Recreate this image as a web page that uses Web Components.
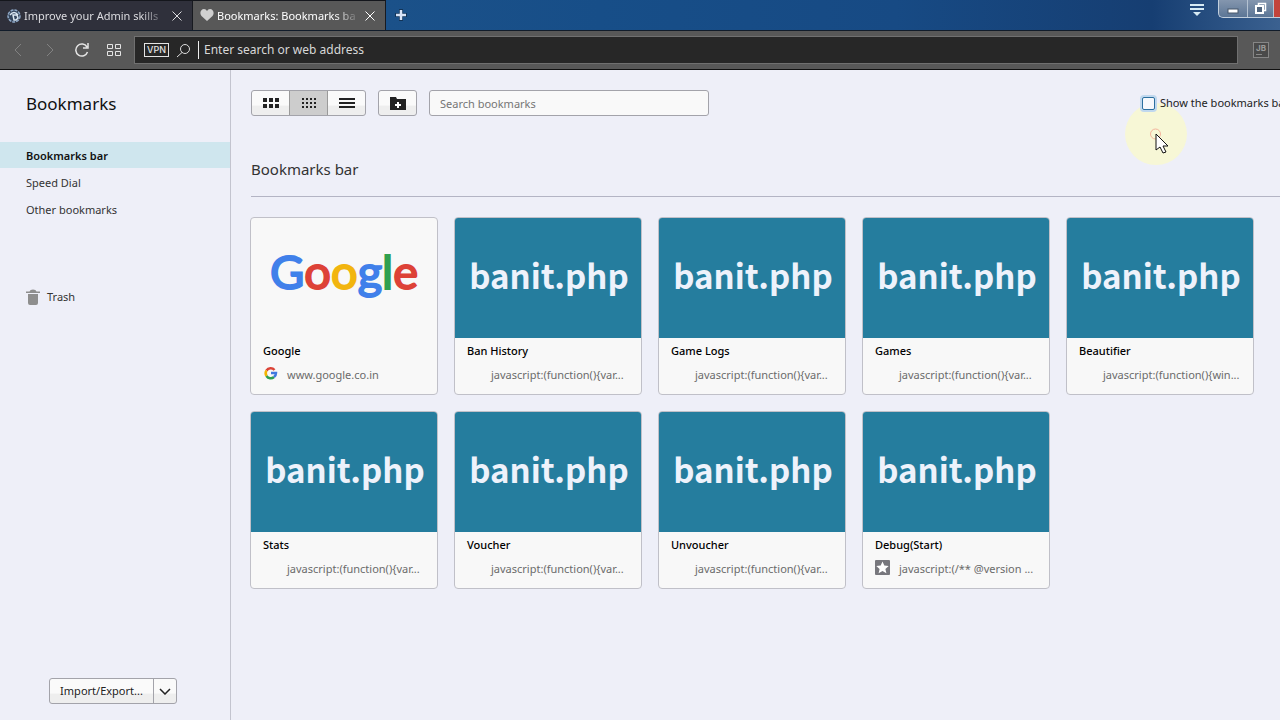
<!DOCTYPE html>
<html lang="en">
<head>
<meta charset="utf-8">
<title>Bookmarks</title>
<style>
html,body{height:100%;margin:0}
body{overflow:hidden;font:11px/18px "Noto Sans","Open Sans",sans-serif;color:#222;background:#eeeff8}
</style>
</head>
<body>
<browser-window>
  <tab-strip slot="tabs">
    <browser-tab><site-globe slot="icon"></site-globe>Improve your Admin skills</browser-tab>
    <browser-tab selected><heart-icon slot="icon"></heart-icon>Bookmarks: Bookmarks bar</browser-tab>
  </tab-strip>
  <address-bar slot="address"></address-bar>
  <bookmark-sidebar slot="side"></bookmark-sidebar>
  <bookmark-toolbar slot="main"></bookmark-toolbar>
  <bookmark-folder slot="main" name="Bookmarks bar">
    <bookmark-card name="Google" url="www.google.co.in" kind="google"></bookmark-card>
    <bookmark-card name="Ban History" url="javascript:(function(){var..."></bookmark-card>
    <bookmark-card name="Game Logs" url="javascript:(function(){var..."></bookmark-card>
    <bookmark-card name="Games" url="javascript:(function(){var..."></bookmark-card>
    <bookmark-card name="Beautifier" url="javascript:(function(){win..."></bookmark-card>
    <bookmark-card name="Stats" url="javascript:(function(){var..."></bookmark-card>
    <bookmark-card name="Voucher" url="javascript:(function(){var..."></bookmark-card>
    <bookmark-card name="Unvoucher" url="javascript:(function(){var..."></bookmark-card>
    <bookmark-card name="Debug(Start)" url="javascript:(/** @version ..." kind="star"></bookmark-card>
  </bookmark-folder>
</browser-window>
<pointer-highlight></pointer-highlight>
<script>
const base = `*,:host{box-sizing:border-box}button,input{font:inherit;color:inherit;margin:0}svg{display:block;flex:none}button{padding:0}`;
function element(name, build) {
  customElements.define(name, class extends HTMLElement {
    constructor() {
      super();
      const [css, html] = build(this);
      this.attachShadow({mode: 'open'}).innerHTML = `<style>${base}${css}</style>${html}`;
    }
  });
}

element('browser-window', () => [`
  :host{display:flex;flex-direction:column;height:100vh}
  .body{display:flex;flex:1;min-height:0}
  main{flex:1;min-width:0;padding:20px 0 0 19px}
`, `<header><slot name="tabs"></slot><slot name="address"></slot></header>
  <div class="body"><slot name="side"></slot><main><slot name="main"></slot></main></div>`]);

element('tab-strip', () => [`
  :host{display:flex;height:31px;overflow:hidden;border-bottom:1px solid #111c2a;background:linear-gradient(90deg,#1b5189 385px,#174e88 600px,#174a84 70%,#163e72 90%,#3b6190)}
  .new{width:30px;border:0;background:none;display:grid;place-items:center}
  .space{flex:1}
  .menu{width:32px;height:20px;border:0;background:none;display:grid;place-items:center;margin-right:5px}
  .win{display:flex;height:18px;border:1px solid #c2cfdd;border-top:0;border-right:0;border-radius:0 0 0 5px;background:linear-gradient(#8496ae,#5c7696)}
  .win button{border:0;border-right:1px solid #b4c2d2;background:none;width:29px;display:grid;place-items:center}
  .win button:nth-child(2){width:26px}
  .win button.x{width:6px;background:#c3443c;border:0}
`, `<slot></slot>
  <button class="new" aria-label="New tab"><svg width="12" height="12"><path d="M6 0v12M0 6h12" stroke="#123458" stroke-width="4"/><path d="M6 1v10M1 6h10" stroke="#d8e4f8" stroke-width="2.500"/></svg></button>
  <span class="space"></span>
  <button class="menu" aria-label="Tab menu"><svg width="14" height="13"><path d="M0 1h14M0 5h14" stroke="#d6eaf4" stroke-width="2"/><path d="M3 8h8l-4 4z" fill="#d6eaf4"/></svg></button>
  <div class="win"><button aria-label="Minimize"><svg width="12" height="12"><rect x="1" y="6" width="10" height="4" fill="#fff" stroke="#46566a"/></svg></button>
  <button aria-label="Restore"><svg width="13" height="13"><path d="M4.500 3V1.500h7v7H10" fill="none" stroke="#fff" stroke-width="1.500"/><rect x="2" y="4" width="7" height="7" fill="#50657f" stroke="#fff" stroke-width="2"/></svg></button>
  <button class="x" aria-label="Close"></button></div>`]);

element('browser-tab', () => [`
  :host{display:flex;align-items:center;width:193px;height:30px;padding:0 7px 0 7px;gap:3px;background:#2f303b;color:#dcdce0;border-right:1px solid #181a20;border-top:1px solid #14161c}
  :host([selected]){background:#585858;color:#fff}
  .t{flex:1;overflow:hidden;white-space:nowrap;-webkit-mask:linear-gradient(90deg,#000 85%,#0003)}
  button{width:16px;height:16px;border:0;background:none;display:grid;place-items:center;margin-left:4px}
`, `<slot name="icon"></slot><span class="t"><slot></slot></span>
  <button aria-label="Close tab"><svg width="10" height="10"><path d="M.5.5l9 9M9.500.5l-9 9" stroke="currentColor"/></svg></button>`]);

element('site-globe', () => [`:host{display:block}`, `<svg width="14" height="14"><circle cx="7" cy="7" r="6" fill="#34465e" stroke="#8fa9c8" stroke-width="1.500" stroke-dasharray="3 1"/><path d="M3 6q4-5 8 0M6 6h4l1 3-2 2H7z" stroke="#dce8f4" stroke-width="1.500" fill="none"/></svg>`]);
element('heart-icon', () => [`:host{display:block}`, `<svg width="14" height="13"><path d="M7 12L1.500 7C-1 4 1 0 4 0q2 0 3 2q1-2 3-2c3 0 5 4 2.500 7z" fill="#d0d0d0"/></svg>`]);

element('address-bar', () => [`
  :host{display:flex;align-items:center;height:39px;background:#585858;border-bottom:1px solid #111;padding:0 11px 0 2px}
  .nav{border:0;background:none;width:32px;height:28px;display:grid;place-items:center;color:#e4e4e4}
  .nav:disabled{color:#828282}
  .field{flex:1;display:flex;align-items:center;height:28px;background:#272727;border:1px solid #707070;padding:0 8px 0 9px;gap:7px}
  .gridb{margin-right:4px}
  .vpn{height:14px;width:25px;border:1px solid #e4e4e4;background:none;color:#e4e4e4;font:500 9px/12px Inter,sans-serif}
  input{flex:1;border:0;border-left:1px solid #eee;background:none;outline:0;color:#e4e4e4;padding:0 0 0 5px;height:18px;font-size:12px;line-height:18px}
  input::placeholder{color:#d8d8d8;opacity:1}
  .jb{margin-left:15px;width:16px;height:16px;border:1px solid #868686;background:linear-gradient(#8a8a8a,#8a8a8a) 2px 11px/6px 1px no-repeat #4a4a4a;color:#9a9a9a;font:700 8px/8px Inter,sans-serif;padding-bottom:4px}
`, `<button class="nav" disabled aria-label="Back"><svg width="8" height="14"><path d="M7 1L1 7l6 6" fill="none" stroke="currentColor"/></svg></button>
  <button class="nav" disabled aria-label="Forward"><svg width="8" height="14"><path d="M1 1l6 6-6 6" fill="none" stroke="currentColor"/></svg></button>
  <button class="nav" aria-label="Reload"><svg width="14" height="14"><path d="M12.500 9A6 6 0 1 1 12 4M13 0v5H8" fill="none" stroke="currentColor" stroke-width="1.500"/></svg></button>
  <button class="nav gridb" aria-label="Speed Dial"><svg width="14" height="12"><path d="M.5.5h5v4h-5zM8.500.5h5v4h-5zM.5 7.500h5v4h-5zM8.500 7.500h5v4h-5z" fill="none" stroke="currentColor"/></svg></button>
  <div class="field"><button class="vpn">VPN</button><svg width="15" height="15"><circle cx="9" cy="6" r="4.500" fill="none" stroke="#ddd"/><path d="M6 9.500L1 14" stroke="#ddd"/></svg>
  <input aria-label="Address" placeholder="Enter search or web address"></div>
  <button class="jb">JB</button>`]);

element('bookmark-sidebar', () => [`
  :host{display:flex;flex-direction:column;width:231px;border-right:1px solid #c3c4cf;padding-bottom:16px}
  h1{margin:22px 0 26px 26px;font-size:17px;line-height:24px;font-weight:400;color:#111}
  nav{display:flex;flex-direction:column;gap:1px}
  a{display:flex;align-items:center;gap:7px;height:26px;padding:1px 0 0 26px;color:#333;text-decoration:none}
  a.on{background:#cfe6ee;color:#111;font-weight:600}
  .trash{margin-top:60px}
  .split{display:flex;margin:auto auto 0 49px;height:26px;border:1px solid #a3a3aa;border-radius:3px;background:linear-gradient(#fafafa 60%,#eee 61%)}
  .split button{border:0;background:none;width:103px}
  .split button+button{width:23px;border-left:1px solid #a3a3aa;display:grid;place-items:center}
`, `<h1>Bookmarks</h1><nav><a class="on" href="#bar">Bookmarks bar</a><a href="#dial">Speed Dial</a><a href="#other">Other bookmarks</a>
  <a class="trash" href="#trash"><svg width="14" height="16"><path d="M0 2.500h3.500Q4 .5 7 .5t3.500 2H14v1.500H0zM2 5h10v9q0 2-2 2H4q-2 0-2-2z" fill="#8e8e8e"/></svg>Trash</a></nav>
  <div class="split"><button>Import/Export...</button><button aria-label="More"><svg width="12" height="7"><path d="M1 1l5 5 5-5" fill="none" stroke="#222" stroke-width="1.500"/></svg></button></div>`]);

const dots = (columns, rows, size, step) => Array.from({length: columns * rows}, (_, i) => `<rect x="${i % columns * step}" y="${Math.floor(i / columns) * step}" width="${size}" height="${size}"/>`).join('');
element('bookmark-toolbar', () => [`
  :host{display:flex;height:26px;white-space:nowrap;align-items:center;padding-left:1px}
  .group{display:flex;height:26px;border:1px solid #a3a3aa;border-radius:3px;background:linear-gradient(#fafafa 60%,#eee 61%);overflow:hidden;margin-right:12px;flex:none}
  .group button{width:37px;border:0;background:none;display:grid;place-items:center;fill:#222}
  .group .on{width:39px;background:#cdcdcd;border:solid #9a9a9a;border-width:0 1px}
  .search{width:280px;height:26px;border:1px solid #a3a3aa;border-radius:3px;background:#f9f9f9;padding:0 10px;outline:0}
  .search::placeholder{color:#757575;opacity:1}
  label{margin-left:auto;display:flex;align-items:center;gap:5px;width:138px;flex:none;color:#222}
  input[type=checkbox]{appearance:none;flex:none;width:13px;height:13px;border:1px solid #2b6f9f;border-radius:2px;background:#f6f8fc;box-shadow:0 0 0 2px #c0d8ee}
`, `<div class="group"><button aria-label="Large tiles"><svg width="16" height="10">${dots(3, 2, 4, 6)}</svg></button><button class="on" aria-label="Small tiles"><svg width="14" height="10">${dots(4, 3, 2, 4)}</svg></button><button aria-label="List"><svg width="16" height="10"><path d="M0 0h16v2H0zM0 4h16v2H0zM0 8h16v2H0z"/></svg></button></div>
  <div class="group"><button aria-label="New folder"><svg width="16" height="13"><path d="M0 0h6l1 2h9v11H0z"/><path d="M8 5v6M5 8h6" stroke="#fff" stroke-width="2"/></svg></button></div>
  <input class="search" aria-label="Search bookmarks" placeholder="Search bookmarks">
  <label><input type="checkbox">Show the bookmarks bar</label>`]);

element('bookmark-folder', host => [`
  :host{display:block}
  h2{margin:0 0 20px 1px;padding:40px 0 13px;font-size:15px;line-height:27px;font-weight:400;color:#333;border-bottom:1px solid #b3b4c4}
  .grid{display:grid;grid-template-columns:repeat(auto-fill,188px);gap:16px}
`, `<h2>${host.getAttribute('name')}</h2><div class="grid"><slot></slot></div>`]);

const thumbs = {
  google: `<div class="pic logo"><span>G</span><span>o</span><span>o</span><span>g</span><span>l</span><span>e</span></div>`,
  plain: `<div class="pic">banit.php</div>`
};
const favicons = {
  google: `<svg width="16" height="16" fill="none" stroke-width="2.500"><path d="M3.500 4.500A5 5 0 0 1 11.500 4" stroke="#db4437"/><path d="M3.500 4.500A5 5 0 0 0 3.500 10" stroke="#f4b400"/><path d="M3.500 10A5 5 0 0 0 11 11" stroke="#2f9e4f"/><path d="M11 11Q13 9.500 13 7H8" stroke="#4079e0"/></svg>`,
  star: `<svg width="16" height="16"><rect width="15" height="15" rx="1" fill="#77777d"/><path d="M7.500 1.500l1.800 4.100 4.400.4-3.300 2.900 1 4.400-3.900-2.300-3.900 2.300 1-4.400L1.300 6l4.400-.4z" fill="#fff"/></svg>`
};
element('bookmark-card', host => {
  const kind = host.getAttribute('kind');
  return [`
  :host{display:block;height:178px;border:1px solid #c0c0c8;border-radius:4px;background:#f8f8f8;overflow:hidden}
  a{display:block;color:inherit;text-decoration:none}
  .pic{height:120px;padding:0 0 6px 2px;display:flex;align-items:center;justify-content:center;background:#257d9e;color:#eef2fb;font:700 33px/50px "Noto Sans CJK SC",sans-serif;white-space:nowrap}
  .logo{padding:0 0 14px;background:none;font:400 47px/60px Lato,sans-serif;-webkit-text-stroke:2px}
  .logo span{color:#4080ea}.logo span:nth-child(2),.logo span:nth-child(6){color:#dd4237}.logo span:nth-child(3){color:#f2b50f}.logo span:nth-child(5){color:#30a04f}
  .name{padding:4px 12px 0;color:#000;font-weight:500}
  .url{display:flex;align-items:center;gap:8px;padding:6px 0 0 12px;color:#6b6b6b;white-space:nowrap}
  .ico{width:16px;height:18px}
`, `<a href="#open">${kind === 'google' ? thumbs.google : thumbs.plain}<div class="name">${host.getAttribute('name')}</div>
  <div class="url"><span class="ico">${favicons[kind] || ''}</span><span>${host.getAttribute('url')}</span></div></a>`];
});

element('pointer-highlight', () => [`
  :host{position:absolute;left:1124px;top:102px;z-index:-1;pointer-events:none}
`, `<svg width="64" height="64"><circle cx="32" cy="32" r="31" fill="#f7f7d6"/><circle cx="31.500" cy="32" r="5" fill="none" stroke="#f4b49c"/><path d="M32 32v16l4-3 3 6 3-1-3-6h5z" fill="#fff" stroke="#111"/></svg>`]);
</script>
</body>
</html>
